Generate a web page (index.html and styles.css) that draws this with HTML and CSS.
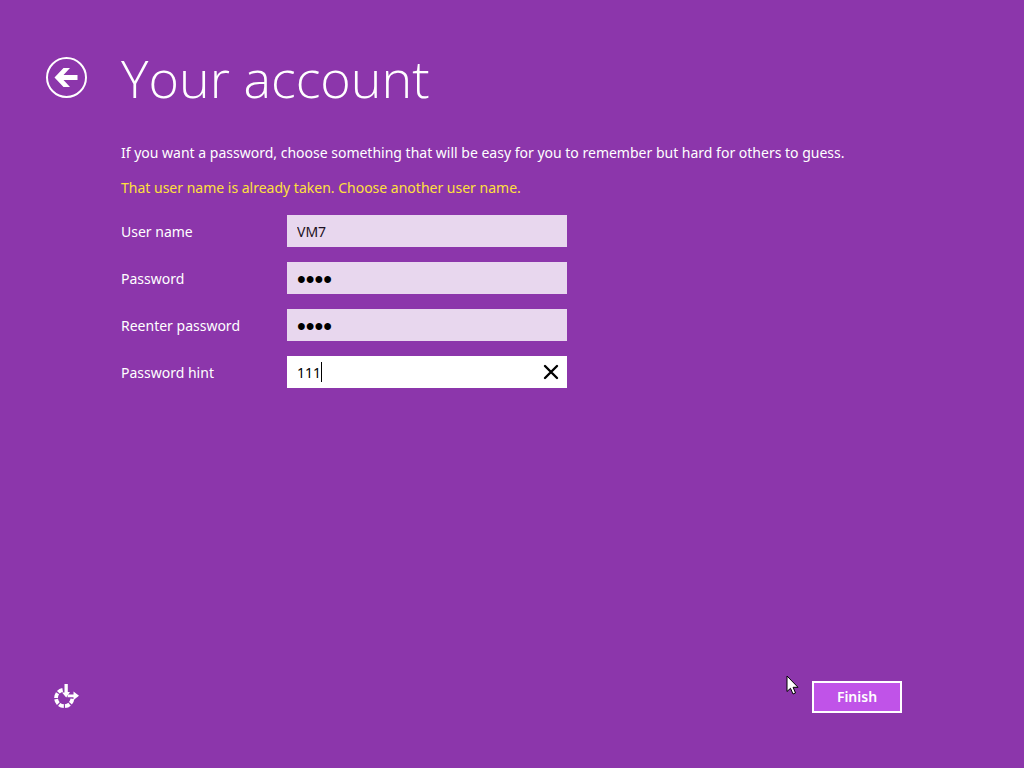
FILE: index.html
```html
<!DOCTYPE html>
<html lang="en">
<head>
    <meta charset="UTF-8">
    <meta name="viewport" content="width=device-width, initial-scale=1.0">
    <title>Your account</title>
    <link rel="stylesheet" href="styles.css">
</head>
<body>

    <!-- Title bar -->
    <header>
        <button type="button" class="back" aria-label="Back">
            <svg width="42" height="42" viewBox="0 0 42 42">
                <circle cx="21.5" cy="20.5" r="19.5" fill="none" stroke="#fff" stroke-width="2"/>
                <path d="M9.5 20.5 L18.5 11 H25 L18.5 18 H32.5 V23 H18.5 L25 30 H18.5 Z" fill="#fff"/>
            </svg>
        </button>
        <h1>Your account</h1>
    </header>

    <!-- Account form -->
    <main>
        <form id="account">
            <p class="intro">If you want a password, choose something that will be easy for you to remember but hard for others to guess.</p>
            <p class="error">That user name is already taken. Choose another user name.</p>

            <div class="row">
                <label for="username">User name</label>
                <div class="field"><input type="text" id="username" value="VM7"></div>
            </div>
            <div class="row">
                <label for="password">Password</label>
                <div class="field"><input type="password" id="password" value="1111"></div>
            </div>
            <div class="row">
                <label for="reenter">Reenter password</label>
                <div class="field"><input type="password" id="reenter" value="1111"></div>
            </div>
            <div class="row">
                <label for="hint">Password hint</label>
                <div class="field active">
                    <input type="text" id="hint" value="111">
                    <span class="caret"></span>
                    <button type="button" class="clear" aria-label="Clear">
                        <svg width="16" height="16" viewBox="0 0 16 16">
                            <path d="M2 2 L14 14 M14 2 L2 14" stroke="#000" stroke-width="2.4" stroke-linecap="round"/>
                        </svg>
                    </button>
                </div>
            </div>
        </form>
    </main>

    <!-- Bottom bar -->
    <footer>
        <button type="button" class="ease" aria-label="Ease of access">
            <svg width="26" height="26" viewBox="0 0 26 26">
                <path d="M19.4 14.8 A8.2 8.2 0 1 1 9.8 5.9" fill="none" stroke="#fff" stroke-width="3.8" stroke-dasharray="5 1.2"/>
                <path d="M11.5 0 H14.8 V8 H17 L13.2 13.5 L9 8.5 H11.5 Z" fill="#fff"/>
                <path d="M15 10.5 H20.5 V7.5 L26 11.8 L20.5 16 V13.2 H14.5 Z" fill="#fff"/>
            </svg>
        </button>
        <div class="actions">
            <svg class="pointer" width="13" height="20" viewBox="0 0 13 20">
                <path d="M1 1 V16.5 L4.5 13.3 L7 19 L9.5 18 L7.1 12.3 H12 Z" fill="#fff" stroke="#000" stroke-width="1"/>
            </svg>
            <button type="submit" form="account" class="finish">Finish</button>
        </div>
    </footer>

</body>
</html>
```
FILE: styles.css
```css
* { box-sizing: border-box; }
body { display: flex; flex-direction: column; min-height: 100vh; margin: 0; background-color: #8c36ab; color: #fff; font-family: "Noto Sans", "Open Sans", sans-serif; font-size: 14px; line-height: 20px; }
button { padding: 0; border: none; background: none; color: inherit; font: inherit; cursor: pointer; }
svg { display: block; }

header { display: flex; align-items: center; gap: 34px; padding: 43px 45px 0; }
h1 { margin: 0; font-family: "Open Sans", sans-serif; font-size: 52px; line-height: 70px; font-weight: 300; }

main { flex: 1; padding: 30px 45px 0 121px; }
p { margin: 0 0 15px; }
.error { margin-bottom: 17px; color: #ffe03c; }
.row { display: flex; align-items: center; margin-bottom: 15px; }
.row label { width: 166px; padding-top: 2px; }
.field { position: relative; width: 280px; height: 32px; background-color: #e8d7ee; }
.field input { width: 100%; height: 100%; padding: 0 10px; border: none; outline: none; background: none; color: #1c1022; font: inherit; }
.field input[type="password"] { padding-top: 2px; color: #000; font-family: "Liberation Sans", sans-serif; font-size: 25px; }
.active { background-color: #fff; }
.active input { padding-right: 32px; color: #000; }
.caret { position: absolute; left: 34px; top: 6px; width: 1px; height: 20px; background-color: #000; }
.clear { position: absolute; right: 8px; top: 8px; }

footer { display: flex; align-items: center; justify-content: space-between; padding: 0 122px 55px 53px; }
.actions { position: relative; }
.pointer { position: absolute; left: -26px; top: -6px; }
.finish { width: 90px; height: 32px; border: 2px solid #fff; background-color: #c053e8; font-weight: 600; }
.finish:hover { background-color: #cb6bee; }
```
